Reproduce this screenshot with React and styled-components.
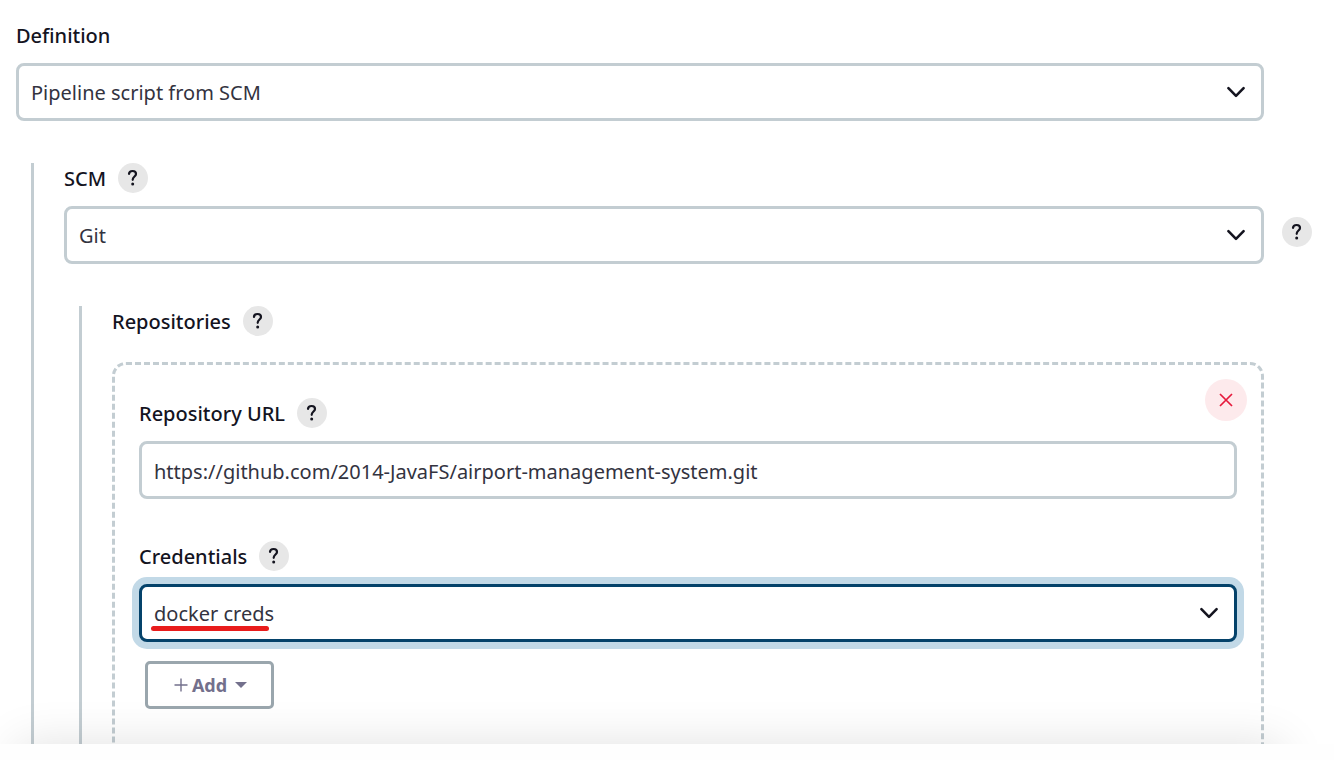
import React from 'react';
import styled, { createGlobalStyle, css } from 'styled-components';

const GlobalStyle = createGlobalStyle`
  *, *::before, *::after { box-sizing: border-box; }
  body {
    margin: 0;
    background: #fff;
    color: #14141f;
    font-family: "Noto Sans", "Open Sans", sans-serif;
    font-size: 20px;
    line-height: 30px;
  }
`;

const Page = styled.div`
  display: flex;
  flex-direction: column;
  height: 100vh;
`;

const ScrollArea = styled.main`
  position: relative;
  flex: 1;
  min-height: 0;
  overflow: hidden;
  padding: 20px 22px 0 16px;

  &::after {
    content: '';
    position: absolute;
    top: 100%;
    left: 16px;
    right: 52px;
    height: 60px;
    box-shadow: 0 0 48px rgba(0, 0, 0, 0.12);
    pointer-events: none;
  }
`;

const BottomBar = styled.footer`
  flex: none;
  height: 16px;
  background: #fefefe;
`;

const Nested = styled.section`
  margin: 42px 0 0 15px;
  padding-left: 30px;
  border-left: 3px solid #c3cdd2;
`;

const LabelRow = styled.div`
  display: flex;
  align-items: center;
  gap: 12px;
  height: 30px;
  margin-bottom: 13px;
`;

const labelStyle = css`
  padding-top: 2px;
  font-weight: 500;
`;

const Label = styled.label`
  ${labelStyle}
`;

const GroupTitle = styled.span`
  ${labelStyle}
`;

const HelpButton = styled.button`
  display: grid;
  place-items: center;
  flex: none;
  width: 30px;
  height: 30px;
  padding: 0;
  border: 0;
  border-radius: 50%;
  background: #e7e7e7;
  color: #14141f;
`;

const WithGutter = styled.div`
  display: grid;
  grid-template-columns: minmax(0, 1fr) 30px;
  column-gap: 18px;
`;

const GutterHelp = styled.div`
  padding-top: 11px;
`;

const controlStyle = css`
  display: block;
  width: 100%;
  height: 58px;
  margin: 0;
  padding: 2px 12px 0;
  border: 3px solid #c3cdd2;
  border-radius: 8px;
  outline: 0;
  background: #fff;
  color: #33333f;
  font: inherit;
`;

const TextInput = styled.input`
  ${controlStyle}
`;

const SelectBox = styled.div`
  position: relative;

  svg {
    position: absolute;
    top: 23px;
    right: 18px;
    pointer-events: none;
  }
`;

const Select = styled.select`
  ${controlStyle}
  appearance: none;
  ${({ $active }) =>
    $active &&
    css`
      border-color: #04426a;
      box-shadow: 0 0 0 7px #c2d9e7;
    `}
`;

const Underline = styled.span`
  position: absolute;
  left: 12px;
  bottom: 11px;
  width: 118px;
  height: 5px;
  border-radius: 3px;
  background: #e91c1c;
`;

const RepositoryCard = styled.div`
  position: relative;
  margin: 26px 48px 0 0;
  padding: 33px 24px 96px;
  border: 3px dashed #c3cdd2;
  border-radius: 14px;
`;

const RemoveButton = styled.button`
  position: absolute;
  top: 14px;
  right: 14px;
  display: grid;
  place-items: center;
  width: 42px;
  height: 42px;
  padding: 0;
  border: 0;
  border-radius: 50%;
  background: #fdeaec;
  color: #e6193c;
`;

const Field = styled.div`
  & + & { margin-top: 42px; }
`;

const AddButton = styled.button`
  display: flex;
  align-items: center;
  justify-content: center;
  gap: 4px;
  width: 129px;
  height: 48px;
  margin: 19px 0 0 6px;
  padding: 0 0 0 2px;
  border: 3px solid #9aa6ad;
  border-radius: 5px;
  background: #fff;
  color: #73708c;
  font: 700 18px/24px "Noto Sans", sans-serif;

  svg:last-child { margin-left: 4px; }
`;

function Help({ topic }) {
  return (
    <HelpButton type="button" aria-label={`Help for ${topic}`}>
      <svg width="12" height="18" viewBox="0 0 12 18" fill="none">
        <path
          d="M2 4.9C2.1 3 3.6 2 5.6 2C7.7 2 9 3.1 9 5C9 7.5 5.7 7.7 5.7 10.8"
          stroke="currentColor"
          strokeWidth="2.2"
          strokeLinecap="round"
        />
        <circle cx="5.7" cy="14.9" r="1.5" fill="currentColor" />
      </svg>
    </HelpButton>
  );
}

function Dropdown({ id, value, active, underlined }) {
  return (
    <SelectBox>
      <Select id={id} $active={active} defaultValue={value}>
        <option>{value}</option>
      </Select>
      {underlined && <Underline />}
      <svg width="20" height="12" viewBox="0 0 20 12" fill="none">
        <path
          d="M2.4 2.2L10 9.8L17.6 2.2"
          stroke="#14141f"
          strokeWidth="2.6"
          strokeLinecap="round"
          strokeLinejoin="round"
        />
      </svg>
    </SelectBox>
  );
}

export default function App() {
  return (
    <Page>
      <GlobalStyle />
      <ScrollArea>
        <LabelRow>
          <Label htmlFor="definition">Definition</Label>
        </LabelRow>
        <WithGutter>
          <Dropdown id="definition" value="Pipeline script from SCM" />
        </WithGutter>

        <Nested>
          <LabelRow>
            <Label htmlFor="scm">SCM</Label>
            <Help topic="SCM" />
          </LabelRow>
          <WithGutter>
            <Dropdown id="scm" value="Git" />
            <GutterHelp>
              <Help topic="Git" />
            </GutterHelp>
          </WithGutter>

          <Nested>
            <LabelRow>
              <GroupTitle>Repositories</GroupTitle>
              <Help topic="Repositories" />
            </LabelRow>
            <RepositoryCard>
              <RemoveButton type="button" aria-label="Remove repository">
                <svg width="14" height="14" viewBox="0 0 14 14" fill="none">
                  <path d="M1 1L13 13M13 1L1 13" stroke="currentColor" strokeWidth="1.7" />
                </svg>
              </RemoveButton>
              <Field>
                <LabelRow>
                  <Label htmlFor="repository-url">Repository URL</Label>
                  <Help topic="Repository URL" />
                </LabelRow>
                <TextInput
                  id="repository-url"
                  type="text"
                  defaultValue="https://github.com/2014-JavaFS/airport-management-system.git"
                />
              </Field>
              <Field>
                <LabelRow>
                  <Label htmlFor="credentials">Credentials</Label>
                  <Help topic="Credentials" />
                </LabelRow>
                <Dropdown id="credentials" value="docker creds" active underlined />
                <AddButton type="button">
                  <svg width="14" height="14" viewBox="0 0 14 14" fill="none">
                    <path d="M7 0.5V13.5M0.5 7H13.5" stroke="currentColor" strokeWidth="1.4" />
                  </svg>
                  Add
                  <svg width="12" height="6" viewBox="0 0 12 6">
                    <path d="M0 0H12L6 6Z" fill="currentColor" />
                  </svg>
                </AddButton>
              </Field>
            </RepositoryCard>
          </Nested>
        </Nested>
      </ScrollArea>
      <BottomBar />
    </Page>
  );
}
